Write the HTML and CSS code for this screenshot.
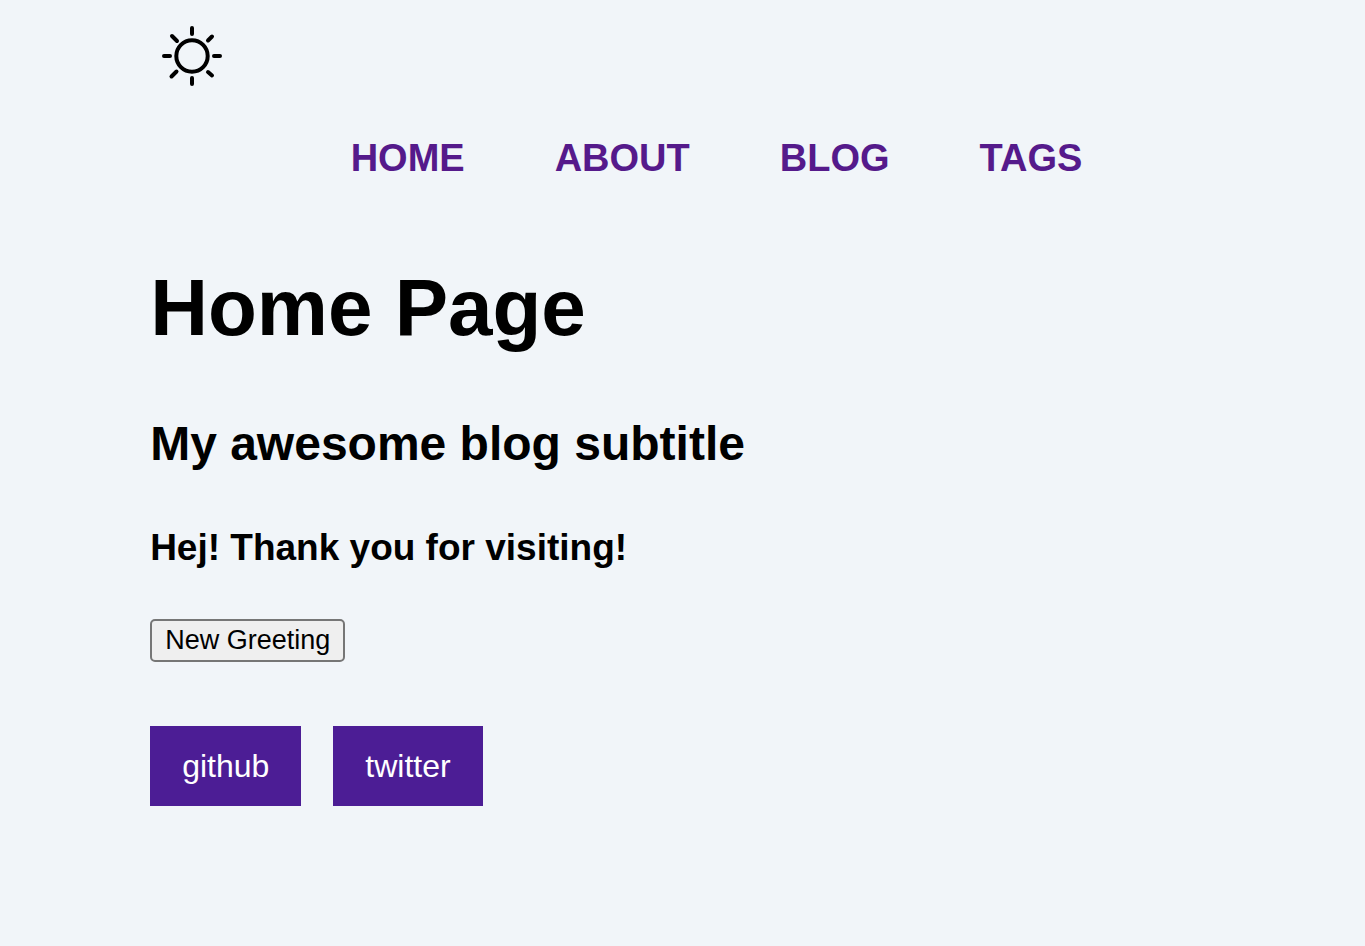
FILE: index.html
```
<!DOCTYPE html>
<html lang="en">
<head>
    <meta charset="UTF-8">
    <meta name="viewport" content="width=device-width, initial-scale=1.0">
    <title>Home Page</title>
    <link rel="stylesheet" href="styles.css">
</head>
<body>

<header>
    <button id="theme-toggle" class="theme-toggle" type="button" aria-label="Toggle theme">
        <svg viewBox="0 0 60 60" width="60" height="60" fill="none" stroke="currentColor" stroke-width="4" stroke-linecap="round">
            <circle cx="30" cy="30" r="15.7"/>
            <path d="M30 2v6M30 52v6M2 30h6M52 30h6"/>
            <path d="M10 10l5 5M50 10.500l-4 4M9.500 50.500l5-5M46 46l4 3.500"/>
        </svg>
    </button>
    <nav>
        <ul class="nav-links">
            <li><a href="#home">HOME</a></li>
            <li><a href="#about">ABOUT</a></li>
            <li><a href="#blog">BLOG</a></li>
            <li><a href="#tags">TAGS</a></li>
        </ul>
    </nav>
</header>

<main>
    <h1>Home Page</h1>
    <h2>My awesome blog subtitle</h2>
    <h3 id="greeting">Hej! Thank you for visiting!</h3>
    <button class="greeting-btn" type="button">New Greeting</button>
</main>

<footer>
    <a class="social" href="#github">github</a>
    <a class="social" href="#twitter">twitter</a>
</footer>

</body>
</html>
```
FILE: styles.css
```
body {
    margin: 0 11%;
    padding-top: 16px;
    background-color: #f1f5f9;
    color: #000;
    font-family: Arial, "Liberation Sans", sans-serif;
    font-size: 32px;
}

.theme-toggle {
    display: block;
    padding: 10px 12px;
    border: none;
    background: none;
    color: #000;
    cursor: pointer;
}

.theme-toggle svg {
    display: block;
}

.nav-links {
    display: flex;
    justify-content: center;
    gap: 90px;
    margin: 40px 0 82px;
    padding: 0 0 0 68px;
    list-style: none;
    font-size: 38px;
    font-weight: bold;
    line-height: 44px;
}

.nav-links a {
    color: #551a8b;
    text-decoration: none;
}

h1 {
    margin: 0 0 62px;
    font-size: 80px;
    line-height: 92px;
}

h2 {
    margin: 0 0 54px;
    font-size: 48px;
    line-height: 56px;
}

h3 {
    margin: 0 0 49px;
    font-size: 37px;
    line-height: 44px;
}

.greeting-btn {
    padding: 4px 13px;
    border: 2px solid #767676;
    border-radius: 5px;
    background-color: #efefef;
    color: #000;
    font-family: inherit;
    font-size: 27px;
    line-height: 31px;
    cursor: pointer;
}

footer {
    display: flex;
    gap: 32px;
    margin: 64px 0;
}

.social {
    padding: 22px 32px;
    background-color: #4c1d95;
    color: #fff;
    line-height: 36px;
    text-decoration: none;
}
```
